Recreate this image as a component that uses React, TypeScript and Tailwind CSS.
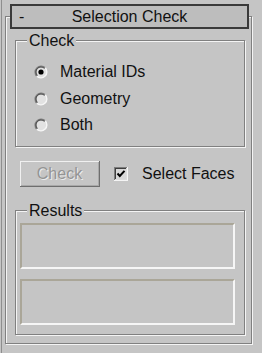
import React from 'react';

const font = { fontFamily: '"Liberation Sans", Arial, sans-serif' };

function Radio({ checked }: { checked?: boolean }) {
  return (
    <svg width="14" height="14" viewBox="0 0 14 14" className="shrink-0">
      <circle cx="7" cy="7" r="6" fill="#e2e2e2" />
      <path d="M2.76 11.24 A6 6 0 0 1 11.24 2.76" fill="none" stroke="#7c7c7c" strokeWidth="1.4" />
      <path d="M3.46 10.54 A5 5 0 0 1 10.54 3.46" fill="none" stroke="#3e3e3e" strokeWidth="1" />
      <path d="M11.24 2.76 A6 6 0 0 1 2.76 11.24" fill="none" stroke="#f6f6f6" strokeWidth="1.4" />
      {checked && <circle cx="7" cy="7" r="2.6" fill="#000" />}
    </svg>
  );
}

function CheckBox() {
  return (
    <svg width="14" height="14" viewBox="0 0 14 14" className="shrink-0">
      <rect x="0" y="0" width="14" height="14" fill="#f4f4f4" />
      <rect x="0" y="0" width="13" height="13" fill="#7c7c7c" />
      <rect x="1" y="1" width="12" height="12" fill="#dcdcdc" />
      <rect x="1" y="1" width="11" height="11" fill="#3e3e3e" />
      <rect x="2" y="2" width="10" height="10" fill="#d8d8d8" />
      <path d="M3.5 6.5 L5.8 9 L10.5 3.8" fill="none" stroke="#000" strokeWidth="2" />
    </svg>
  );
}

function Group({ label, className, children }: { label: string; className: string; children: React.ReactNode }) {
  return (
    <div className={`relative ml-[9px] w-[230px] border border-[#808080] shadow-[inset_1px_1px_0_#f4f4f4,1px_1px_0_#f4f4f4] ${className}`}>
      <span className="absolute -top-[9px] left-[11px] bg-[#c5c5c5] px-[2px] leading-[18px]">{label}</span>
      {children}
    </div>
  );
}

export default function App() {
  const options = ['Material IDs', 'Geometry', 'Both'];

  return (
    <div className="flex h-[353px] w-[262px] bg-[#c5c5c5] text-[16px] text-[#111]" style={font}>
      <div className="ml-[1px] h-full w-[1px] bg-[#8e8e8e]" />
      <div className="ml-[3px] mt-[16px] h-[328px] w-[247px] border border-[#808080] shadow-[inset_1px_1px_0_#f4f4f4,1px_1px_0_#f4f4f4]">
        <div className="relative -mt-[13px] ml-[4px] grid h-[25px] w-[239px] grid-cols-[1fr_auto_1fr] items-center border-2 border-[#3a3a3a] bg-[#bdbdbd] leading-[18px]">
          <span className="pl-[7px]">-</span>
          <span>Selection Check</span>
          <span />
        </div>

        <Group label="Check" className="mt-[11px] h-[107px] pt-[18px] pl-[18px]">
          {options.map((opt, i) => (
            <div key={opt} className="flex h-[26.5px] items-center gap-[12px] leading-[26.5px]">
              <Radio checked={i === 0} />
              <span>{opt}</span>
            </div>
          ))}
        </Group>

        <div className="ml-[14px] mt-[14px] flex items-center">
          <div className="flex h-[26px] w-[80px] items-center justify-center border-b border-r border-[#6e6e6e] shadow-[inset_1px_1px_0_#f0f0f0,inset_-1px_-1px_0_#a8a8a8] text-[#949494] [text-shadow:1px_1px_0_#ececec] leading-[18px]">
            Check
          </div>
          <div className="ml-[14px] flex items-center gap-[14px] leading-[18px]">
            <CheckBox />
            <span>Select Faces</span>
          </div>
        </div>

        <Group label="Results" className="mt-[23px] h-[125px] pt-[12px] pl-[4px]">
          <div className="flex flex-col gap-[10px]">
            <div className="h-[46px] w-[215px] border-2 border-t-[#aaa698] border-l-[#aaa698] border-b-[#f6f6f6] border-r-[#f6f6f6]" />
            <div className="h-[46px] w-[215px] border-2 border-t-[#aaa698] border-l-[#aaa698] border-b-[#f6f6f6] border-r-[#f6f6f6]" />
          </div>
        </Group>
      </div>
    </div>
  );
}
